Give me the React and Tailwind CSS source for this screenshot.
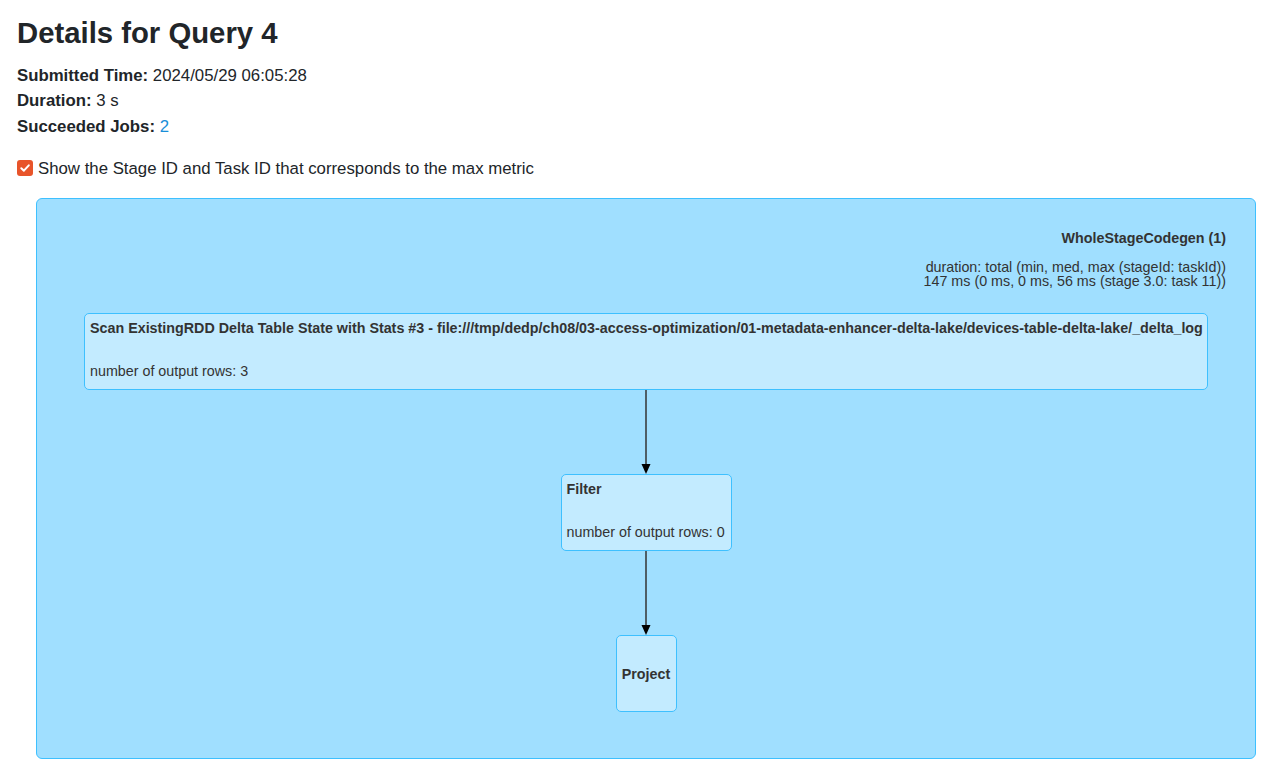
import React from "react";

// Plan node box used in the query graph
const PlanNode = ({ title, metric, className = "" }) => (
  <div
    className={`h-[77px] shrink-0 whitespace-nowrap rounded-[5px] border border-[#3EC0FF] bg-[#C3EBFF] text-[14.3px] leading-[14px] text-[#333] ${className}`}
  >
    {metric ? (
      <div className="flex flex-col pl-[5px] pt-[7px]">
        <div className="font-bold">{title}</div>
        <div className="mt-[29px]">{metric}</div>
      </div>
    ) : (
      <div className="flex h-full items-center justify-center font-bold">{title}</div>
    )}
  </div>
);

const Arrow = () => (
  <svg width="12" height="84" viewBox="0 0 12 84" className="block shrink-0">
    <line x1="6" y1="0" x2="6" y2="75" stroke="#333" strokeWidth="1.5" />
    <polygon points="1.5,74 10.5,74 6,84" fill="#000" />
  </svg>
);

const App = () => {
  return (
    <div className="min-h-screen bg-white px-[17px] font-['Liberation_Sans',Arial,sans-serif] text-[#212529]">
      <h3 className="pt-[16px] text-[29.3px] font-bold leading-[33.6px]">Details for Query 4</h3>

      <ul className="mt-[13px] text-[16.8px] leading-[25.5px]">
        <li>
          <strong>Submitted Time:</strong> 2024/05/29 06:05:28
        </li>
        <li>
          <strong>Duration:</strong> 3 s
        </li>
        <li>
          <strong>Succeeded Jobs:</strong> <a className="text-[#1a8fd8]">2</a>
        </li>
      </ul>

      <label className="mt-[18px] flex h-[24px] items-center text-[16.8px] leading-[24px]">
        <span className="mr-[5px] flex h-[16px] w-[16px] -translate-y-[1px] items-center justify-center rounded-[3px] bg-[#E8542A]">
          <svg width="12" height="12" viewBox="0 0 12 12">
            <path d="M2.3 6.2 L4.9 8.7 L9.8 3.3" fill="none" stroke="#fff" strokeWidth="2" strokeLinecap="round" strokeLinejoin="round" />
          </svg>
        </span>
        Show the Stage ID and Task ID that corresponds to the max metric
      </label>

      {/* query plan graph */}
      <div className="ml-[19px] mt-[17px] flex w-[1220px] flex-col items-center rounded-[6px] border border-[#3EC0FF] bg-[#A0DFFF] pb-[46px] pt-[32px] text-[#333]">
        <div className="w-full pr-[29px] text-right text-[14.3px] leading-[14px]">
          <div className="font-bold">WholeStageCodegen (1)</div>
          <div className="mt-[15px]">duration: total (min, med, max (stageId: taskId))</div>
          <div>147 ms (0 ms, 0 ms, 56 ms (stage 3.0: task 11))</div>
        </div>

        <PlanNode
          className="mt-[25px] w-[1124px]"
          title="Scan ExistingRDD Delta Table State with Stats #3 - file:///tmp/dedp/ch08/03-access-optimization/01-metadata-enhancer-delta-lake/devices-table-delta-lake/_delta_log"
          metric="number of output rows: 3"
        />
        <Arrow />
        <PlanNode className="w-[171px]" title="Filter" metric="number of output rows: 0" />
        <Arrow />
        <PlanNode className="w-[61px]" title="Project" />
      </div>
    </div>
  );
};

export default App;
